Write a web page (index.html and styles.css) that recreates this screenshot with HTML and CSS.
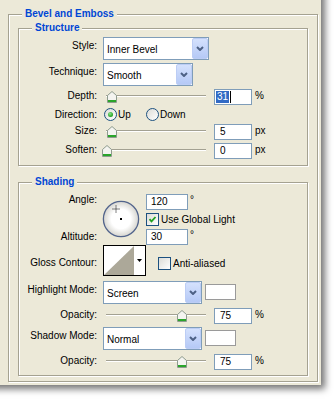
FILE: index.html
```html
<!DOCTYPE html>
<html lang="en">
<head>
<meta charset="utf-8">
<title>Bevel and Emboss</title>
<link rel="stylesheet" href="styles.css">
</head>
<body>
<div class="window">
  <section class="group outer">
    <h2 class="title">Bevel and Emboss</h2>

    <section class="group structure">
      <h3 class="title">Structure</h3>

      <div class="row sel-row">
        <span class="lbl">Style:</span>
        <div class="combo w-style"><span class="val">Inner Bevel</span><span class="btn"><svg width="8" height="5" viewBox="0 0 8 5"><path d="M1 1l3 3 3-3" fill="none" stroke="#4D6185" stroke-width="2"/></svg></span></div>
      </div>
      <div class="row sel-row">
        <span class="lbl">Technique:</span>
        <div class="combo w-tech"><span class="val">Smooth</span><span class="btn"><svg width="8" height="5" viewBox="0 0 8 5"><path d="M1 1l3 3 3-3" fill="none" stroke="#4D6185" stroke-width="2"/></svg></span></div>
      </div>
      <div class="row in-row">
        <span class="lbl">Depth:</span>
        <div class="slider"><div class="track"></div><span class="thumb" style="left:4px"><svg width="10" height="12" viewBox="0 0 10 12"><path d="M.5 4.5 5 .5l4.5 4v7h-9z" fill="#F4F4F0" stroke="#8E9B8E"/><path d="M1 10h8" stroke="#2AA52A" stroke-width="2"/></svg></span></div>
        <div class="field"><span class="hl">31</span><span class="caret"></span></div>
        <span class="unit">%</span>
      </div>
      <div class="row in-row">
        <span class="lbl">Direction:</span>
        <div class="radios">
          <span class="opt"><span class="radio on"></span>Up</span>
          <span class="opt"><span class="radio"></span>Down</span>
        </div>
      </div>
      <div class="row in-row">
        <span class="lbl">Size:</span>
        <div class="slider"><div class="track"></div><span class="thumb" style="left:4px"><svg width="10" height="12" viewBox="0 0 10 12"><path d="M.5 4.5 5 .5l4.5 4v7h-9z" fill="#F4F4F0" stroke="#8E9B8E"/><path d="M1 10h8" stroke="#2AA52A" stroke-width="2"/></svg></span></div>
        <div class="field">5</div>
        <span class="unit">px</span>
      </div>
      <div class="row in-row">
        <span class="lbl">Soften:</span>
        <div class="slider"><div class="track"></div><span class="thumb" style="left:-1px"><svg width="10" height="12" viewBox="0 0 10 12"><path d="M.5 4.5 5 .5l4.5 4v7h-9z" fill="#F4F4F0" stroke="#8E9B8E"/><path d="M1 10h8" stroke="#2AA52A" stroke-width="2"/></svg></span></div>
        <div class="field">0</div>
        <span class="unit">px</span>
      </div>
    </section>

    <section class="group shading">
      <h3 class="title">Shading</h3>

      <div class="angle-block">
        <div class="lbl-col"><span class="lbl">Angle:</span><span class="lbl">Altitude:</span></div>
        <div class="dial"><svg width="38" height="38" viewBox="0 0 38 38"><defs><radialGradient id="dialfill" cx="50%" cy="50%" r="50%"><stop offset="0.55" stop-color="#FFFFFF"/><stop offset="1" stop-color="#D6D5CF"/></radialGradient></defs><circle cx="19" cy="19" r="17.6" fill="url(#dialfill)" stroke="#52648C" stroke-width="1.3"/><path d="M10.5 9h7M14 5.5v7" stroke="#000" stroke-width="1" stroke-dasharray="1 1"/><rect x="18" y="18" width="2" height="2" fill="#000"/></svg></div>
        <div class="angle-ctrls">
          <div class="line"><div class="field wide">120</div><span class="deg">°</span></div>
          <div class="check-line"><span class="checkbox"><svg width="11" height="11" viewBox="0 0 11 11"><path d="M2.5 5.2l2 2.2 4-4.4" fill="none" stroke="#21A121" stroke-width="1.8"/></svg></span>Use Global Light</div>
          <div class="line"><div class="field wide">30</div><span class="deg">°</span></div>
        </div>
      </div>

      <div class="row gloss-row">
        <span class="lbl">Gloss Contour:</span>
        <div class="contour"><span class="curve"><svg width="30" height="29" viewBox="0 0 30 29"><path d="M0 29L30 0V29Z" fill="#ACA899"/></svg></span><span class="drop"><svg width="5" height="3" viewBox="0 0 5 3"><path d="M0 0h5L2.5 3z" fill="#000"/></svg></span></div>
        <div class="check-line aa"><span class="checkbox"></span>Anti-aliased</div>
      </div>

      <div class="row sel-row mt5">
        <span class="lbl">Highlight Mode:</span>
        <div class="combo w-mode"><span class="val">Screen</span><span class="btn"><svg width="8" height="5" viewBox="0 0 8 5"><path d="M1 1l3 3 3-3" fill="none" stroke="#4D6185" stroke-width="2"/></svg></span></div>
        <span class="swatch"></span>
      </div>
      <div class="row in-row mt4">
        <span class="lbl">Opacity:</span>
        <div class="slider"><div class="track"></div><span class="thumb" style="left:74px"><svg width="10" height="12" viewBox="0 0 10 12"><path d="M.5 4.5 5 .5l4.5 4v7h-9z" fill="#F4F4F0" stroke="#8E9B8E"/><path d="M1 10h8" stroke="#2AA52A" stroke-width="2"/></svg></span></div>
        <div class="field">75</div>
        <span class="unit">%</span>
      </div>
      <div class="row sel-row mt3">
        <span class="lbl">Shadow Mode:</span>
        <div class="combo w-mode"><span class="val">Normal</span><span class="btn"><svg width="8" height="5" viewBox="0 0 8 5"><path d="M1 1l3 3 3-3" fill="none" stroke="#4D6185" stroke-width="2"/></svg></span></div>
        <span class="swatch"></span>
      </div>
      <div class="row in-row mt4">
        <span class="lbl">Opacity:</span>
        <div class="slider"><div class="track"></div><span class="thumb" style="left:74px"><svg width="10" height="12" viewBox="0 0 10 12"><path d="M.5 4.5 5 .5l4.5 4v7h-9z" fill="#F4F4F0" stroke="#8E9B8E"/><path d="M1 10h8" stroke="#2AA52A" stroke-width="2"/></svg></span></div>
        <div class="field">75</div>
        <span class="unit">%</span>
      </div>
    </section>
  </section>
</div>
</body>
</html>
```

FILE: styles.css
```css
* { box-sizing: border-box; }
html, body { margin: 0; padding: 0; }
body {
  width: 334px;
  height: 402px;
  overflow: hidden;
  background: #fff;
  font-family: "Liberation Sans", Arial, sans-serif;
  font-size: 10px;
  color: #000;
}

.window {
  width: 341px;
  margin: -20px 0 0 -20px;
  padding: 34px 3px 3px 28px;
  background: #ECE9D8;
  box-shadow: 4px 4px 7px rgba(0, 0, 0, 0.55);
}

.group {
  position: relative;
  border: 1px solid #A5A291;
  box-shadow: inset 1px 1px 0 #fff, 1px 1px 0 #fff;
}

.title {
  position: absolute;
  top: -8px;
  left: 13px;
  margin: 0;
  padding: 0 3px;
  background: #ECE9D8;
  color: #0046D5;
  font-size: 10px;
  font-weight: bold;
  line-height: 13px;
}

.outer {
  width: 310px;
  padding: 13px 9px 5px;
}

.structure {
  display: flex;
  flex-direction: column;
  gap: 3px;
  padding: 8px 0 6px;
}

.shading {
  display: flex;
  flex-direction: column;
  margin-top: 16px;
  padding: 11px 0 5px;
}

.mt3 { margin-top: 3px; }
.mt4 { margin-top: 4px; }
.mt5 { margin-top: 5px; }

.row {
  display: flex;
  align-items: flex-start;
}

.lbl {
  flex: none;
  width: 78px;
  text-align: right;
  line-height: 12px;
  white-space: nowrap;
}
.sel-row .lbl { margin-top: 3px; }
.in-row .lbl { margin-top: 1px; }

/* combo box */
.combo {
  display: flex;
  justify-content: space-between;
  height: 23px;
  margin-left: 6px;
  border: 1px solid #7F9DB9;
  background: #fff;
}
.w-style { width: 106px; }
.w-tech { width: 90px; }
.w-mode { width: 99px; }
.combo .val {
  line-height: 12px;
  padding: 6px 0 0 3px;
  white-space: nowrap;
}
.combo .btn {
  display: flex;
  align-items: center;
  justify-content: center;
  flex: none;
  width: 16px;
  height: 21px;
  border: 1px solid #BCCDF5;
  border-radius: 2px;
  background: linear-gradient(#D4E1FD, #B5C9F6);
}

/* text field */
.field {
  flex: none;
  width: 38px;
  height: 16px;
  margin-left: 7px;
  padding: 1px 5px;
  border: 1px solid #7F9DB9;
  background: #fff;
  line-height: 12px;
  display: flex;
  align-items: flex-start;
}
.field .hl {
  margin-left: -4px;
  padding: 0 1px;
  background: #316AC5;
  color: #fff;
}
.field .caret {
  width: 1px;
  height: 12px;
  margin-left: 1px;
  background: #000;
}
.unit {
  margin-left: 3px;
  line-height: 12px;
  margin-top: 1px;
}

/* slider */
.slider {
  position: relative;
  flex: none;
  width: 104px;
  height: 16px;
  margin-left: 6px;
  padding: 6px 1px 0 3px;
}
.track {
  height: 2px;
  border-top: 1px solid #A3A192;
  border-bottom: 1px solid #fff;
}
.thumb {
  position: absolute;
  top: 2px;
  display: block;
  line-height: 0;
}

/* radios */
.radios {
  display: flex;
  margin-left: 7px;
}
.opt {
  display: flex;
  align-items: center;
  line-height: 12px;
  width: 42px;
}
.radio {
  position: relative;
  flex: none;
  width: 13px;
  height: 13px;
  margin-right: 1px;
  border: 1px solid #1C5180;
  border-radius: 50%;
  background: linear-gradient(135deg, #DCDCD7, #fff);
}
.radio.on::after {
  content: "";
  position: absolute;
  left: 3px;
  top: 3px;
  width: 5px;
  height: 5px;
  border-radius: 50%;
  background: radial-gradient(circle at 40% 35%, #8BE28B, #21A121 70%);
}

/* angle block */
.angle-block {
  display: flex;
  height: 51px;
}
.lbl-col {
  display: flex;
  flex-direction: column;
  justify-content: space-between;
  width: 78px;
  padding: 0 0 2px;
}
.lbl-col .lbl { margin-top: 0; }
.dial {
  flex: none;
  width: 38px;
  height: 38px;
  margin: 6px 0 0 5px;
  line-height: 0;
}
.angle-ctrls {
  display: flex;
  flex-direction: column;
  justify-content: space-between;
  margin-left: 6px;
}
.line {
  display: flex;
  align-items: flex-start;
}
.line .field { margin-left: 0; }
.field.wide { width: 42px; padding-left: 4px; }
.deg {
  margin-left: 2px;
  line-height: 12px;
}

.check-line {
  display: flex;
  align-items: center;
  line-height: 12px;
  white-space: nowrap;
}
.checkbox {
  flex: none;
  width: 13px;
  height: 13px;
  margin-right: 2px;
  border: 1px solid #1C5180;
  background: linear-gradient(135deg, #DCDCD7, #fff);
  line-height: 0;
}

/* gloss contour */
.gloss-row .lbl { margin-top: 12px; }
.contour {
  display: flex;
  flex: none;
  width: 43px;
  height: 31px;
  margin-left: 6px;
  border: 1px solid #000;
  background: #fff;
}
.curve { width: 30px; height: 29px; line-height: 0; }
.drop {
  display: flex;
  justify-content: center;
  align-items: center;
  width: 11px;
  line-height: 0;
}
.aa {
  margin: 12px 0 0 12px;
}

.swatch {
  flex: none;
  width: 31px;
  height: 16px;
  margin: 3px 0 0 3px;
  border: 1px solid #9A9A9A;
  background: #fff;
}
```
